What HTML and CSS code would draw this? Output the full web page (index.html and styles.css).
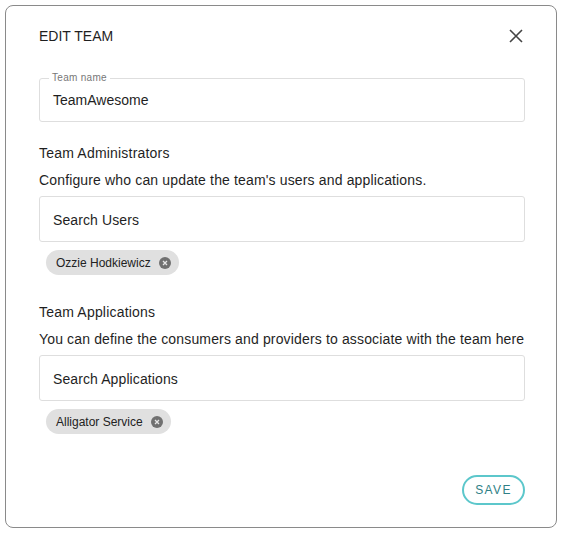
FILE: index.html
```html
<!DOCTYPE html>
<html>
<head>
<meta charset="utf-8">
<link rel="stylesheet" href="styles.css">
</head>
<body>
<div class="dialog">
  <div class="header">
    <h1 class="title">EDIT TEAM</h1>
    <button class="close" aria-label="Close">
      <svg width="14" height="14" viewBox="0 0 14 14"><path d="M1 1L13 13M13 1L1 13" stroke="#444" stroke-width="1.6" fill="none"/></svg>
    </button>
  </div>
  <fieldset class="field outlined">
    <legend class="legend">Team name</legend>
    <div class="value">TeamAwesome</div>
  </fieldset>

  <div class="section first">
    <div class="section-title">Team Administrators</div>
    <div class="section-desc">Configure who can update the team's users and applications.</div>
    <div class="field search">Search Users</div>
    <div class="chips">
      <span class="chip">Ozzie Hodkiewicz<span class="chip-x"><svg width="12" height="12" viewBox="0 0 12 12"><circle cx="6" cy="6" r="6" fill="#707070"/><path d="M4 4L8 8M8 4L4 8" stroke="#e6e6e6" stroke-width="1.3"/></svg></span></span>
    </div>
  </div>

  <div class="section">
    <div class="section-title">Team Applications</div>
    <div class="section-desc">You can define the consumers and providers to associate with the team here</div>
    <div class="field search">Search Applications</div>
    <div class="chips">
      <span class="chip">Alligator Service<span class="chip-x"><svg width="12" height="12" viewBox="0 0 12 12"><circle cx="6" cy="6" r="6" fill="#707070"/><path d="M4 4L8 8M8 4L4 8" stroke="#e6e6e6" stroke-width="1.3"/></svg></span></span>
    </div>
  </div>

  <div class="footer">
    <button class="save">SAVE</button>
  </div>
</div>
</body>
</html>
```

FILE: styles.css
```css
* { box-sizing: border-box; }
html, body { margin: 0; padding: 0; background: #fff; }
body {
  font-family: "Liberation Sans", Arial, sans-serif;
  color: #1f1f1f;
  padding: 5px;
}
.dialog {
  width: 552px;
  height: 523px;
  border: 1px solid #8a8a8a;
  border-radius: 8px;
  padding: 0 32px 0 33px;
  display: flex;
  flex-direction: column;
}
.dialog > * { flex-shrink: 0; }
.header {
  display: flex;
  align-items: center;
  justify-content: space-between;
  height: 60px;
}
.title {
  margin: 0;
  font-size: 14px;
  font-weight: normal;
  line-height: 20px;
}
.close {
  border: none;
  background: none;
  padding: 0;
  width: 14px;
  height: 14px;
  margin-right: 1px;
  display: flex;
}
.field {
  border: 1px solid #dedede;
  border-radius: 3px;
  font-size: 14px;
  width: 486px;
}
.outlined {
  margin: 0;
  margin-top: 6px;
  padding: 0 13px;
  height: 50px;
  min-inline-size: 0;
}
.legend {
  font-size: 10px;
  color: #777;
  padding: 0 3px;
  margin-left: -4px;
  line-height: 12px;
  letter-spacing: 0.3px;
}
.value {
  line-height: 20px;
  padding-top: 6px;
}
.section { display: flex; flex-direction: column; }
.section.first { margin-top: 21px; }
.section-title {
  font-size: 14px;
  line-height: 20px;
  letter-spacing: 0.2px;
}
.section-desc {
  font-size: 14px;
  line-height: 20px;
  margin-top: 7px;
  letter-spacing: 0.15px;
  white-space: nowrap;
}
.search {
  margin-top: 6px;
  height: 46px;
  padding: 2px 13px 0;
  display: flex;
  align-items: center;
  letter-spacing: 0.1px;
}
.chips {
  display: flex;
  padding-left: 7px;
  margin-top: 8px;
  margin-bottom: 27px;
}
.chip {
  display: inline-flex;
  align-items: center;
  height: 25px;
  border-radius: 13px;
  background: #e0e0e0;
  font-size: 12px;
  color: #222;
  padding: 0 8px 0 10px;
  gap: 8px;
}
.chip-x { display: flex; }
.footer {
  margin-top: auto;
  display: flex;
  justify-content: flex-end;
  padding-bottom: 22px;
  margin-right: -1px;
}
.save {
  width: 63px;
  height: 30px;
  border: 2px solid #5cc7cb;
  border-radius: 15px;
  background: #fff;
  color: #2f7f86;
  font-family: "Liberation Sans", Arial, sans-serif;
  font-size: 12px;
  letter-spacing: 1.4px;
  padding: 0;
}
```
